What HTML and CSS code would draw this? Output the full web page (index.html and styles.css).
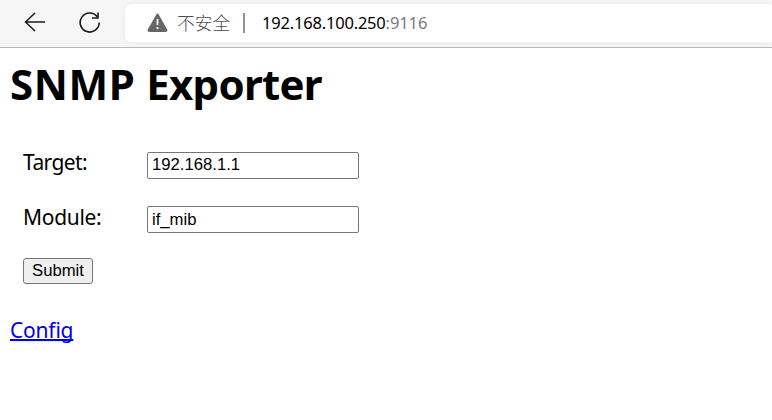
FILE: index.html
```html
<!DOCTYPE html>
<html lang="en">
<head>
<meta charset="utf-8">
<title>SNMP Exporter</title>
<link rel="stylesheet" href="styles.css">
</head>
<body>
<header class="toolbar">
  <svg class="back" width="22" height="20" viewBox="0 0 22 20" fill="none" stroke="#1b1b1b" stroke-width="1.5"><path d="M21 10H1.500M11 1L1.500 10l9.500 9"/></svg>
  <svg class="reload" width="22" height="22" viewBox="0 0 22 22" fill="none" stroke="#1b1b1b" stroke-width="1.600"><path d="M20.200 10.500A9.500 9.500 0 1 1 18.200 4.700M19 .5v5.500h-6"/></svg>
  <div class="address">
    <svg class="warning" width="22" height="20" viewBox="0 0 22 20"><path d="M9.300 1.500Q10.500 -0.500 11.700 1.500L20.200 16.500Q21 19 18.500 19H2.500Q0 19 .8 16.500Z" fill="#666"/><path d="M10.500 6v6M10.500 14v2" stroke="#fff" stroke-width="1.800"/></svg>
    <span class="insecure">不安全</span>
    <span class="divider"></span>
    <span class="host">192.168.100.250</span><span class="port">:9116</span>
  </div>
</header>
<main>
  <h1><span class="wide">SNMP</span> <span class="tight">Exporter</span></h1>
  <form>
    <div class="row target"><label for="target">Target:</label><input id="target" type="text" value="192.168.1.1"></div>
    <div class="row module"><label for="module">Module:</label><input id="module" type="text" value="if_mib"></div>
    <button type="button">Submit</button>
  </form>
  <a class="config" href="#">Config</a>
</main>
</body>
</html>
```
FILE: styles.css
```css
* { box-sizing: border-box; }
body {
  margin: 0;
  background: #fff;
  color: #000;
  font: 21px/28px "Noto Sans", "Noto Sans CJK SC", sans-serif;
  overflow: hidden;
}
.toolbar {
  display: flex;
  height: 48px;
  background: #f6f6f6;
  border-bottom: 1px solid #b9b9b9;
}
svg { display: block; flex: none; }
.back { margin: 12px 0 0 24px; }
.reload { margin: 12px 0 0 33px; }
.address {
  display: flex;
  flex: 1;
  align-items: center;
  height: 38px;
  margin: 4px 0 0 24px;
  padding-left: 22px;
  background: #fff;
  border-radius: 6px 0 0 6px;
  box-shadow: 0 0 5px #e7e7e7;
  font-size: 16.5px;
  white-space: nowrap;
}
.warning { margin-top: -1px; }
.insecure {
  margin: -2px 0 0 8px;
  font: 300 17.700px/28px "Noto Sans CJK SC", sans-serif;
  color: #4c4c4c;
}
.divider {
  width: 2px;
  height: 20px;
  margin: 0 17px 0 13px;
  background: #929292;
}
.host { letter-spacing: -0.200px; }
.port { color: #7b7b7b; letter-spacing: -0.100px; }
main { padding: 8px 10px 0; }
h1 {
  margin: 0;
  font-size: 42px;
  line-height: 56px;
  font-weight: 700;
}
.wide { letter-spacing: 0.600px; }
.tight { letter-spacing: -0.750px; }
form { padding: 40px 0 0 13px; }
.row {
  display: flex;
  height: 27px;
  margin-bottom: 27px;
}
label { width: 124px; }
.target label { line-height: 20px; letter-spacing: -0.600px; }
.module label { line-height: 22px; letter-spacing: -0.300px; }
input {
  width: 212px;
  height: 27px;
  padding: 0 4px 2px;
  border: 1px solid #767676;
  border-radius: 2px;
  background: #fff;
  font: 16.700px "Liberation Sans", sans-serif;
}
.module input { padding: 1px 4px 0; }
button {
  display: block;
  width: 70px;
  height: 26px;
  margin-top: -2px;
  padding: 0 0 1px;
  border: 1px solid #767676;
  border-radius: 3px;
  background: #efefef;
  color: #000;
  font: 16.700px "Liberation Sans", sans-serif;
}
.config {
  display: inline-block;
  margin-top: 32px;
  color: #00e;
  letter-spacing: -0.200px;
  text-decoration: underline;
  text-decoration-thickness: 2px;
  text-underline-offset: 1px;
  text-decoration-skip-ink: none;
}
```
